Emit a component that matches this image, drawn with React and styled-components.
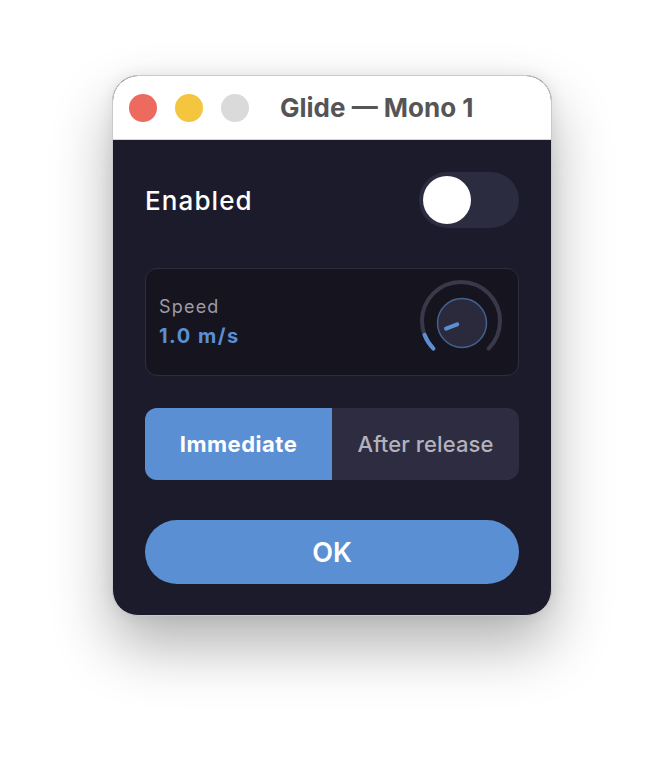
import React, { useState } from "react";
import styled, { createGlobalStyle } from "styled-components";

const GlobalStyle = createGlobalStyle`
  html, body {
    margin: 0;
    padding: 0;
    background: #ffffff;
  }
  body {
    font-family: Inter, "Noto Sans", "Liberation Sans", sans-serif;
    -webkit-font-smoothing: antialiased;
  }
`;

const Page = styled.div`
  width: 664px;
  height: 764px;
  display: flex;
  justify-content: center;
  padding-top: 75px;
  box-sizing: border-box;
  background: #ffffff;
`;

const Window = styled.div`
  width: 440px;
  height: 541px;
  display: flex;
  flex-direction: column;
  border-radius: 26px;
  overflow: hidden;
  box-sizing: border-box;
  border: 1px solid #c9c9cc;
  background: #1c1b2b;
  box-shadow: 0 30px 60px rgba(0, 0, 0, 0.3), 0 0 16px rgba(0, 0, 0, 0.08);
`;

const TitleBar = styled.div`
  height: 63px;
  flex-shrink: 0;
  display: flex;
  align-items: center;
  padding-left: 16px;
  gap: 18px;
  background: #ffffff;
  border-bottom: 1px solid #d6d6d8;
`;

const Light = styled.span`
  width: 28px;
  height: 28px;
  border-radius: 50%;
  background: ${p => p.color};
`;

const Title = styled.div`
  margin-left: 13px;
  font-size: 26px;
  font-weight: 700;
  color: #555558;
  letter-spacing: 0;
`;

const Body = styled.div`
  flex: 1;
  display: flex;
  flex-direction: column;
  padding: 32px 32px 0 32px;
`;

const Row = styled.div`
  display: flex;
  align-items: center;
  justify-content: space-between;
  height: 56px;
`;

const Label = styled.span`
  font-size: 26px;
  font-weight: 500;
  color: #ffffff;
  letter-spacing: 1.1px;
`;

const Toggle = styled.button`
  width: 100px;
  height: 56px;
  border: none;
  border-radius: 28px;
  background: #2c2c40;
  padding: 4px;
  display: flex;
  justify-content: ${p => (p.on ? "flex-end" : "flex-start")};
  cursor: pointer;
`;

const Thumb = styled.span`
  width: 48px;
  height: 48px;
  border-radius: 50%;
  background: #ffffff;
`;

const Card = styled.div`
  margin-top: 40px;
  height: 108px;
  box-sizing: border-box;
  border: 1.5px solid #2e2d3e;
  border-radius: 12px;
  background: #16151f;
  display: flex;
  align-items: center;
  justify-content: space-between;
  padding: 0 11px 0 13px;
`;

const ParamText = styled.div`
  display: flex;
  flex-direction: column;
  gap: 6px;
`;

const ParamName = styled.span`
  font-size: 18px;
  line-height: 22px;
  color: #9d9ca6;
  letter-spacing: 1.2px;
`;

const ParamValue = styled.span`
  font-size: 20px;
  line-height: 24px;
  font-weight: 700;
  color: #5b8fd4;
  letter-spacing: 1.5px;
`;

const Segmented = styled.div`
  margin-top: 32px;
  height: 72px;
  display: grid;
  grid-template-columns: 187px 1fr;
  border-radius: 12px;
  overflow: hidden;
  background: #2d2c40;
`;

const Segment = styled.button`
  border: none;
  font-family: inherit;
  font-size: 22px;
  font-weight: ${p => (p.active ? 700 : 500)};
  color: ${p => (p.active ? "#ffffff" : "#b3b2bc")};
  background: ${p => (p.active ? "#5b8fd4" : "transparent")};
  letter-spacing: ${p => (p.active ? "0.5px" : "0.1px")};
  cursor: pointer;
`;

const OkButton = styled.button`
  margin-top: 40px;
  height: 64px;
  border: none;
  border-radius: 32px;
  background: #5b8fd4;
  color: #ffffff;
  font-family: inherit;
  font-size: 27px;
  font-weight: 600;
  cursor: pointer;
`;

const polar = (cx, cy, r, deg) => {
  const a = ((deg - 90) * Math.PI) / 180;
  return [cx + r * Math.cos(a), cy + r * Math.sin(a)];
};

const arc = (cx, cy, r, from, to) => {
  const [x1, y1] = polar(cx, cy, r, from);
  const [x2, y2] = polar(cx, cy, r, to);
  const large = to - from > 180 ? 1 : 0;
  return `M ${x1} ${y1} A ${r} ${r} 0 ${large} 1 ${x2} ${y2}`;
};

const Knob = ({ value }) => {
  const start = -135;
  const end = 135;
  const angle = start + (end - start) * value;
  const [ix1, iy1] = polar(46, 47, 4, angle);
  const [ix2, iy2] = polar(46, 47, 16, angle);
  return (
    <svg width="92" height="92" viewBox="0 0 92 92">
      <path d={arc(46, 45, 39, start, end)} stroke="#3a3949" strokeWidth="4" fill="none" strokeLinecap="round" />
      <path d={arc(46, 45, 39, start, angle)} stroke="#5b8fd4" strokeWidth="4" fill="none" strokeLinecap="round" />
      <circle cx="47" cy="47" r="24.5" fill="#2b2a3c" stroke="#42628f" strokeWidth="1.5" />
      <line x1={ix1} y1={iy1} x2={ix2} y2={iy2} stroke="#5b8fd4" strokeWidth="4" strokeLinecap="round" />
    </svg>
  );
};

const App = () => {
  const [enabled, setEnabled] = useState(false);
  const [mode, setMode] = useState("immediate");

  return (
    <Page>
      <GlobalStyle />
      <Window>
        <TitleBar>
          <Light color="#ec6a5e" />
          <Light color="#f4c63f" />
          <Light color="#dadada" />
          <Title>Glide — Mono 1</Title>
        </TitleBar>
        <Body>
          <Row>
            <Label>Enabled</Label>
            <Toggle on={enabled ? 1 : 0} onClick={() => setEnabled(!enabled)}>
              <Thumb />
            </Toggle>
          </Row>
          <Card>
            <ParamText>
              <ParamName>Speed</ParamName>
              <ParamValue>1.0 m/s</ParamValue>
            </ParamText>
            <Knob value={0.09} />
          </Card>
          <Segmented>
            <Segment active={mode === "immediate"} onClick={() => setMode("immediate")}>
              Immediate
            </Segment>
            <Segment active={mode === "after"} onClick={() => setMode("after")}>
              After release
            </Segment>
          </Segmented>
          <OkButton>OK</OkButton>
        </Body>
      </Window>
    </Page>
  );
};

export default App;
